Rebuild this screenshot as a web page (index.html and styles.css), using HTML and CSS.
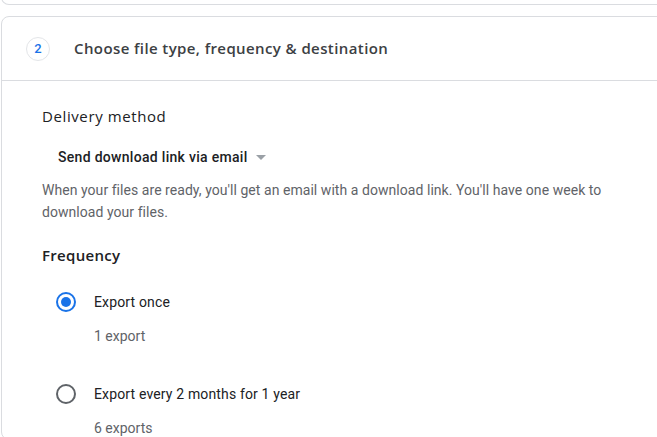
FILE: index.html
```html
<!DOCTYPE html>
<html>
<head>
<meta charset="utf-8">
<link rel="stylesheet" href="styles.css">
</head>
<body>
<div class="page">
  <div class="card card-prev"></div>
  <div class="card card-step">
    <div class="step-header">
      <span class="step-num">2</span>
      <span class="step-title">Choose file type, frequency &amp; destination</span>
    </div>
    <div class="step-body">
      <h3 class="section-title">Delivery method</h3>
      <div class="dropdown">
        <span class="dropdown-label">Send download link via email</span>
        <svg class="dropdown-arrow" width="10" height="5" viewBox="0 0 10 5"><path d="M0 0h10L5 5z" fill="#9aa0a6"/></svg>
      </div>
      <p class="help">When your files are ready, you'll get an email with a download link. You'll have one week to download your files.</p>
      <h3 class="section-title freq">Frequency</h3>
      <div class="option">
        <span class="radio radio-on"></span>
        <div class="option-text">
          <div class="option-label">Export once</div>
          <div class="option-sub">1 export</div>
        </div>
      </div>
      <div class="option">
        <span class="radio"></span>
        <div class="option-text">
          <div class="option-label">Export every 2 months for 1 year</div>
          <div class="option-sub">6 exports</div>
        </div>
      </div>
    </div>
  </div>
</div>
</body>
</html>
```
FILE: styles.css
```css
html, body {
  margin: 0;
  padding: 0;
  background: #fff;
  overflow: hidden;
}
body {
  font-family: Roboto, "Liberation Sans", sans-serif;
  color: #202124;
}
.page {
  width: 664px;
  padding-left: 1px;
}
.card {
  border: 1px solid #dadce0;
  border-radius: 8px;
  background: #fff;
}
.card-prev {
  box-sizing: border-box;
  height: 21px;
  margin-top: -16px;
  border-top: none;
  border-radius: 0 0 8px 8px;
}
.card-step {
  margin-top: 11px;
}
.step-header {
  height: 63px;
  display: flex;
  align-items: center;
  padding-left: 24px;
  border-bottom: 1px solid #dadce0;
}
.step-num {
  width: 22px;
  height: 22px;
  border: 1px solid #e3e5e8;
  border-radius: 50%;
  display: flex;
  align-items: center;
  justify-content: center;
  color: #1a73e8;
  font-size: 13px;
  font-weight: 500;
}
.step-title {
  margin-left: 24px;
  margin-top: -2px;
  font-family: "Open Sans", sans-serif;
  font-size: 15px;
  font-weight: 600;
  color: #3c4043;
  letter-spacing: 0.4px;
}
.step-body {
  padding: 25px 0 0 40px;
}
.section-title {
  margin: 0;
  font-family: "Open Sans", sans-serif;
  font-size: 15px;
  font-weight: 500;
  color: #202124;
  line-height: 20px;
  letter-spacing: 0.6px;
}
.dropdown {
  display: flex;
  align-items: center;
  margin: 21px 0 0 16px;
  height: 20px;
}
.dropdown-label {
  font-size: 14px;
  font-weight: 500;
  color: #202124;
  letter-spacing: 0.3px;
}
.dropdown-arrow {
  margin-left: 8px;
}
.help {
  margin: 12px 0 0;
  font-size: 14px;
  line-height: 22px;
  color: #5f6368;
  width: 580px;
  letter-spacing: 0.05px;
}
.freq {
  margin-top: 22px;
  font-weight: 600;
  letter-spacing: 0.3px;
}
.option {
  display: flex;
  align-items: flex-start;
  margin-top: 26px;
  padding-left: 14px;
}
.option + .option {
  margin-top: 36px;
}
.radio {
  box-sizing: border-box;
  width: 20px;
  height: 20px;
  border: 2px solid #5f6368;
  border-radius: 50%;
  flex: none;
  position: relative;
  margin-top: 1px;
}
.radio-on {
  border-color: #1a73e8;
}
.radio-on::after {
  content: "";
  position: absolute;
  left: 3px;
  top: 3px;
  width: 10px;
  height: 10px;
  border-radius: 50%;
  background: #1a73e8;
}
.option-text {
  margin-left: 18px;
}
.option-label {
  font-size: 14px;
  line-height: 22px;
  color: #202124;
  letter-spacing: 0.15px;
}
.option-sub {
  margin-top: 12px;
  font-size: 14px;
  line-height: 22px;
  color: #5f6368;
}
```
